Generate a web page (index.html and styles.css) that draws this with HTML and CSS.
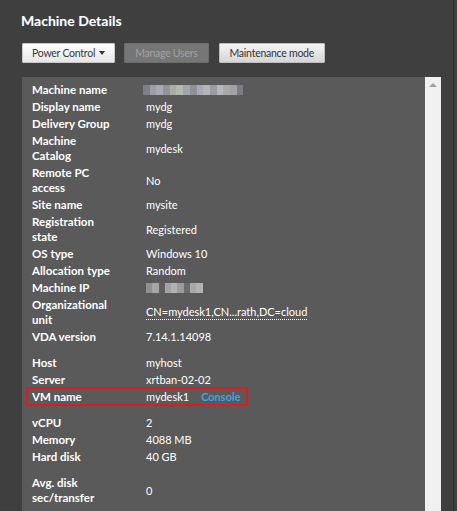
FILE: index.html
```html
<!DOCTYPE html>
<html>
<head>
<meta charset="utf-8">
<link rel="stylesheet" href="styles.css">
</head>
<body>
<div class="page">
  <div class="main">
    <h1 class="title">Machine Details</h1>
    <div class="toolbar">
      <button class="btn btn-light">Power Control <span class="caret"></span></button>
      <button class="btn btn-disabled">Manage Users</button>
      <button class="btn btn-gray">Maintenance mode</button>
    </div>
    <div class="panel">
      <div class="content">
        <div class="group">
          <div class="row"><div class="label">Machine name</div><div class="value"><span class="blur blur-name"><i style="background:#7c8087"></i><i style="background:#9b9fa6"></i><i style="background:#a7aab0"></i><i style="background:#8f9598"></i><i style="background:#a9ada7"></i><i style="background:#b4b8b0"></i><i style="background:#9ea7a9"></i><i style="background:#8c9296"></i><i style="background:#a7a9b4"></i><i style="background:#b2b4b8"></i><i style="background:#9c9aa6"></i><i style="background:#b6bab6"></i><i style="background:#a5a9a9"></i><i style="background:#9ea2a6"></i><i style="background:#7f7a82"></i></span></div></div>
          <div class="row"><div class="label">Display name</div><div class="value">mydg</div></div>
          <div class="row"><div class="label">Delivery Group</div><div class="value">mydg</div></div>
          <div class="row"><div class="label">Machine Catalog</div><div class="value">mydesk</div></div>
          <div class="row"><div class="label">Remote PC access</div><div class="value">No</div></div>
          <div class="row"><div class="label">Site name</div><div class="value">mysite</div></div>
          <div class="row"><div class="label">Registration state</div><div class="value">Registered</div></div>
          <div class="row"><div class="label">OS type</div><div class="value">Windows 10</div></div>
          <div class="row"><div class="label">Allocation type</div><div class="value">Random</div></div>
          <div class="row"><div class="label">Machine IP</div><div class="value"><span class="blur blur-ip"><i style="background:#8e9094"></i><i style="background:#a3a5a8"></i><i style="background:#5e5e60"></i><i style="background:#a1a3a6"></i><i style="background:#b0b2b4"></i><i style="background:#9a9c9f"></i><i style="background:#6a6b6d"></i><i style="background:#a6a8aa"></i><i style="background:#b2b3b5"></i></span></div></div>
          <div class="row"><div class="label">Organizational unit</div><div class="value"><span class="dotted">CN=mydesk1,CN...rath,DC=cloud</span></div></div>
          <div class="row"><div class="label">VDA version</div><div class="value">7.14.1.14098</div></div>
        </div>
        <div class="group">
          <div class="row"><div class="label">Host</div><div class="value">myhost</div></div>
          <div class="row"><div class="label">Server</div><div class="value">xrtban-02-02</div></div>
          <div class="row row-hl"><div class="label">VM name</div><div class="value">mydesk1<a class="link">Console</a></div><span class="highlight"></span></div>
        </div>
        <div class="group">
          <div class="row"><div class="label">vCPU</div><div class="value">2</div></div>
          <div class="row"><div class="label">Memory</div><div class="value">4088 MB</div></div>
          <div class="row"><div class="label">Hard disk</div><div class="value">40 GB</div></div>
        </div>
        <div class="group">
          <div class="row"><div class="label">Avg. disk sec/transfer</div><div class="value">0</div></div>
        </div>
      </div>
      <div class="scrollbar"><span class="arrow-up"></span></div>
    </div>
  </div>
  <div class="edge"><span class="edge-line"></span></div>
</div>
</body>
</html>
```
FILE: styles.css
```css
html, body {
  margin: 0;
  padding: 0;
  height: 100%;
  background: #3f3f3f;
  overflow: hidden;
}
.page {
  display: flex;
  height: 511px;
  font-family: Lato, "Open Sans", sans-serif;
  font-size: 11px;
  color: #fff;
}
.main {
  flex: 1;
  display: flex;
  flex-direction: column;
  padding-left: 22px;
}
.title {
  margin: 12px 0 0 -1px;
  font-size: 14px;
  line-height: 18px;
  font-weight: 700;
  color: #fff;
  text-shadow: 0 0 1px rgba(120,170,255,0.35);
}
.toolbar {
  display: flex;
  gap: 9px;
  margin-top: 13px;
}
.btn {
  height: 20px;
  padding: 0 10px;
  font-family: inherit;
  font-size: 10.5px;
  letter-spacing: -0.25px;
  line-height: 18px;
  border-radius: 1px;
  display: flex;
  align-items: center;
  gap: 4px;
}
.btn-light {
  background: linear-gradient(#ffffff, #e6e6e6);
  border: 1px solid #c8c8c8;
  color: #3a3a3a;
  padding: 0 9px 0 9px;
}
.btn-disabled {
  background: #767676;
  border: 1px solid #6c6c6c;
  color: #a2a2a2;
  padding: 0 10px;
}
.btn-gray {
  background: linear-gradient(#f4f4f4, #d6d6d6);
  border: 1px solid #bdbdbd;
  color: #333;
  padding: 0 10px;
  margin-left: 1px;
}
.caret {
  width: 0;
  height: 0;
  border-left: 3px solid transparent;
  border-right: 3px solid transparent;
  border-top: 4px solid #333;
}
.panel {
  flex: 1;
  display: flex;
  margin-top: 14px;
  background: #5a5a5a;
  min-height: 0;
}
.content {
  flex: 1;
  padding: 4px 0 0 10px;
  display: flex;
  flex-direction: column;
  gap: 9px;
}
.row {
  display: grid;
  grid-template-columns: 114px 1fr;
  align-items: center;
  padding: 1px 0;
  line-height: 15px;
  position: relative;
}
.label {
  font-weight: 700;
  font-size: 11.5px;
  width: 84px;
}
.value {
  display: flex;
  align-items: center;
}
.blur {
  display: flex;
  height: 10px;
  margin-left: -3px;
}
.blur i {
  display: block;
  width: 6.7px;
  height: 10px;
}
.blur-ip {
  margin-left: 0;
}
.blur-ip i {
  width: 6.3px;
}
.dotted {
  border-bottom: 1px dotted #fff;
  line-height: 14px;
}
.link {
  color: #3ba4e6;
  font-weight: 700;
  margin-left: 12px;
}
.highlight {
  position: absolute;
  left: -6px;
  top: -1px;
  width: 218px;
  height: 15px;
  border: 2px solid #e11a22;
}
.scrollbar {
  width: 16px;
  background: #f0f0f0;
  display: flex;
  justify-content: center;
  padding-top: 6px;
  box-sizing: border-box;
}
.arrow-up {
  width: 0;
  height: 0;
  border-left: 4px solid transparent;
  border-right: 4px solid transparent;
  border-bottom: 4px solid #a0a0a0;
}
.edge {
  width: 13px;
  display: flex;
  justify-content: flex-end;
  padding-right: 3px;
}
.edge-line {
  width: 1px;
  background: #2f2f2f;
}
```
